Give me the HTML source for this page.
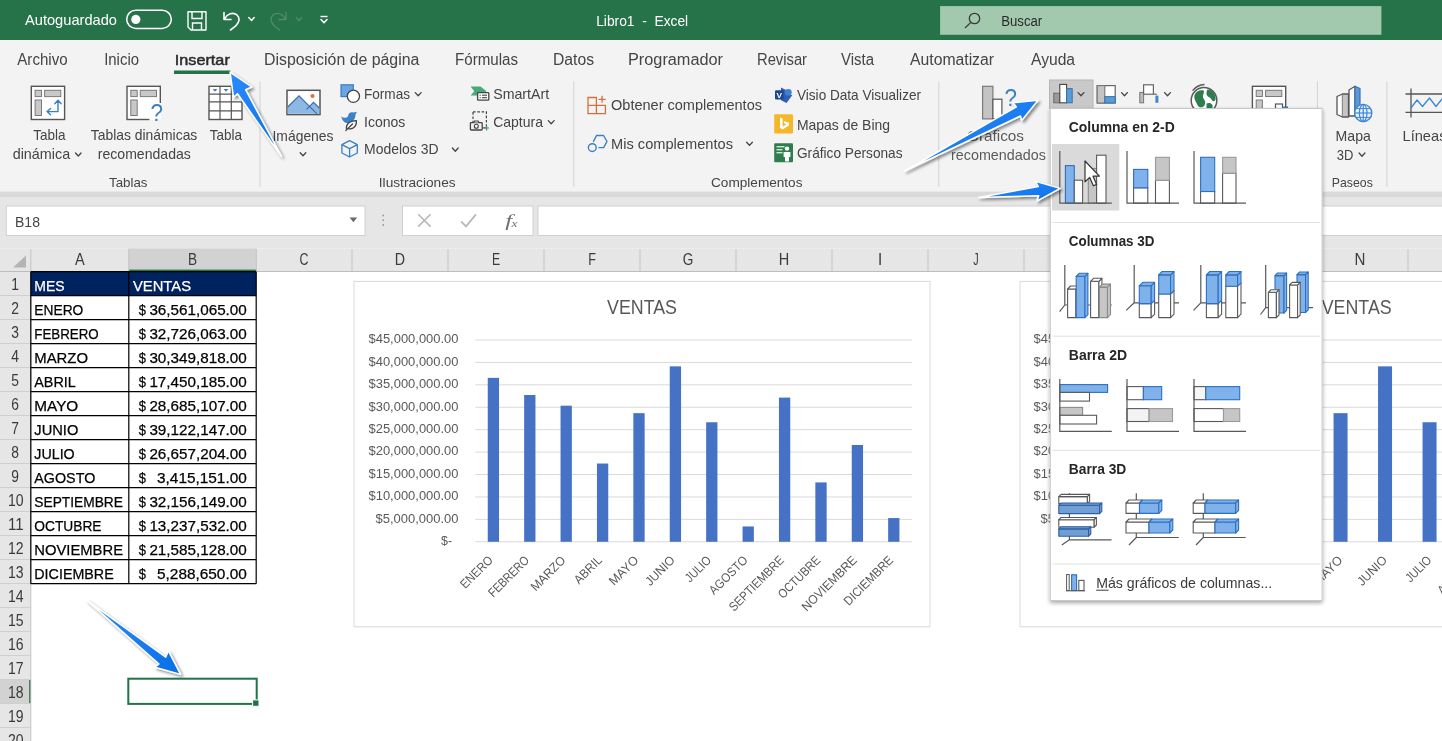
<!DOCTYPE html>
<html lang="es"><head><meta charset="utf-8"><title>Libro1 - Excel</title>
<style>
html,body{margin:0;padding:0;background:#fff;overflow:hidden}
svg{display:block}
text{font-family:"Liberation Sans", sans-serif;white-space:pre;paint-order:stroke}
</style></head><body>
<svg width="1442" height="741" viewBox="0 0 1442 741">
<defs>
<linearGradient id="ag" x1="0" y1="0" x2="1" y2="1"><stop offset="0" stop-color="#2b8cff"/><stop offset="1" stop-color="#0a6fe6"/></linearGradient>
<filter id="sh" x="-20%" y="-20%" width="150%" height="150%"><feGaussianBlur in="SourceAlpha" stdDeviation="1.6"/><feOffset dx="1.5" dy="2"/><feComponentTransfer><feFuncA type="linear" slope="0.45"/></feComponentTransfer><feMerge><feMergeNode/><feMergeNode in="SourceGraphic"/></feMerge></filter>
<filter id="dsh" x="-5%" y="-5%" width="112%" height="112%"><feGaussianBlur in="SourceAlpha" stdDeviation="2.2"/><feOffset dx="0" dy="1.5"/><feComponentTransfer><feFuncA type="linear" slope="0.35"/></feComponentTransfer><feMerge><feMergeNode/><feMergeNode in="SourceGraphic"/></feMerge></filter>
<filter id="soft" filterUnits="userSpaceOnUse" x="-20" y="-20" width="1482" height="781"><feGaussianBlur stdDeviation="0.4"/></filter>
</defs>
<g filter="url(#soft)">
<rect x="-20.00" y="-20.00" width="1482.00" height="781.00" fill="#ffffff"/>
<rect x="-20.00" y="-20.00" width="1482.00" height="60.00" fill="#277249"/>
<rect x="-20.00" y="40.00" width="1482.00" height="151.50" fill="#f3f3f3"/>
<rect x="-20.00" y="191.50" width="1482.00" height="5.50" fill="#dadada"/>
<rect x="-20.00" y="197.00" width="1482.00" height="51.50" fill="#e6e6e6"/>
<text x="25.0" y="25.0" font-size="14.5" fill="#ffffff" textLength="92.0" lengthAdjust="spacingAndGlyphs">Autoguardado</text>
<rect x="126.70" y="10.20" width="44.60" height="18.20" fill="none" stroke="#ffffff" stroke-width="1.5" rx="9.1"/>
<circle cx="135.8" cy="19.4" r="4.6" fill="#fff"/>
<path d="M188 11.8 H206 V30 H191 L188 27 Z" fill="none" stroke="#ffffff" stroke-width="1.4" stroke-linejoin="round"/>
<path d="M192 11.8 V18.5 H202 V11.8" fill="none" stroke="#ffffff" stroke-width="1.4"/>
<path d="M192.5 30 V23 H201.5 V30" fill="none" stroke="#ffffff" stroke-width="1.4"/>
<path d="M224 12.5 V19.5 H231 M224.5 19 C227 14 233 11.5 237 15 C241.5 19.5 238 25 230.5 30" fill="none" stroke="#ffffff" stroke-width="1.6" stroke-linecap="round" stroke-linejoin="round"/>
<path d="M248.8 17.5 L251.5 20.5 L254.2 17.5" fill="none" stroke="#ffffff" stroke-width="1.5" stroke-linecap="round" stroke-linejoin="round"/>
<path d="M286 12.5 V19.5 H279 M285.5 19 C283 14 277 11.5 273 15 C268.5 19.5 272 25 279.5 30" fill="none" stroke="#4f8c68" stroke-width="1.4" stroke-linecap="round" stroke-linejoin="round"/>
<path d="M296.2 17.5 L299.0 20.5 L301.8 17.5" fill="none" stroke="#4f8c68" stroke-width="1.3" stroke-linecap="round" stroke-linejoin="round"/>
<line x1="320.50" y1="16.50" x2="327.50" y2="16.50" stroke="#ffffff" stroke-width="1.4"/>
<path d="M321.0 19.6 L324.0 22.8 L327.0 19.6" fill="none" stroke="#ffffff" stroke-width="1.5" stroke-linecap="round" stroke-linejoin="round"/>
<text x="596.2" y="26.0" font-size="14" fill="#ffffff" textLength="92.0" lengthAdjust="spacingAndGlyphs">Libro1  -  Excel</text>
<rect x="940.10" y="6.10" width="441.30" height="28.70" fill="#a2c9ae"/>
<circle cx="974.5" cy="18.5" r="5.2" fill="none" stroke="#3a3a3a" stroke-width="1.3"/>
<line x1="970.80" y1="22.40" x2="965.00" y2="28.00" stroke="#3a3a3a" stroke-width="1.3"/>
<text x="1001.2" y="26.0" font-size="14" fill="#2b2b2b" textLength="41.0" lengthAdjust="spacingAndGlyphs">Buscar</text>
<text x="17.3" y="65.0" font-size="16" fill="#444444" textLength="50.3" lengthAdjust="spacingAndGlyphs">Archivo</text>
<text x="104.2" y="65.0" font-size="16" fill="#444444" textLength="34.8" lengthAdjust="spacingAndGlyphs">Inicio</text>
<text x="264.0" y="65.0" font-size="16" fill="#444444" textLength="155.4" lengthAdjust="spacingAndGlyphs">Disposición de página</text>
<text x="455.0" y="65.0" font-size="16" fill="#444444" textLength="63.0" lengthAdjust="spacingAndGlyphs">Fórmulas</text>
<text x="553.0" y="65.0" font-size="16" fill="#444444" textLength="41.0" lengthAdjust="spacingAndGlyphs">Datos</text>
<text x="628.0" y="65.0" font-size="16" fill="#444444" textLength="95.0" lengthAdjust="spacingAndGlyphs">Programador</text>
<text x="757.0" y="65.0" font-size="16" fill="#444444" textLength="50.0" lengthAdjust="spacingAndGlyphs">Revisar</text>
<text x="841.0" y="65.0" font-size="16" fill="#444444" textLength="33.0" lengthAdjust="spacingAndGlyphs">Vista</text>
<text x="910.0" y="65.0" font-size="16" fill="#444444" textLength="84.0" lengthAdjust="spacingAndGlyphs">Automatizar</text>
<text x="1031.0" y="65.0" font-size="16" fill="#444444" textLength="44.0" lengthAdjust="spacingAndGlyphs">Ayuda</text>
<text x="174.8" y="65.0" font-size="15.5" fill="#2b2b2b" textLength="55.0" lengthAdjust="spacingAndGlyphs" stroke="#2b2b2b" stroke-width="0.5">Insertar</text>
<rect x="174.00" y="70.50" width="56.50" height="3.50" fill="#217346"/>
<line x1="260.00" y1="81.50" x2="260.00" y2="187.00" stroke="#d2d2d2" stroke-width="1"/>
<line x1="573.80" y1="81.50" x2="573.80" y2="187.00" stroke="#d2d2d2" stroke-width="1"/>
<line x1="938.80" y1="81.50" x2="938.80" y2="187.00" stroke="#d2d2d2" stroke-width="1"/>
<line x1="1317.40" y1="81.50" x2="1317.40" y2="187.00" stroke="#d2d2d2" stroke-width="1"/>
<line x1="1386.90" y1="81.50" x2="1386.90" y2="187.00" stroke="#d2d2d2" stroke-width="1"/>
<rect x="31.30" y="86.30" width="33.30" height="33.20" fill="#fff" stroke="#555555" stroke-width="1.4"/>
<rect x="35.10" y="90.30" width="6.40" height="6.30" fill="#c8c8c8" stroke="#7a7a7a" stroke-width="1"/>
<rect x="44.60" y="90.30" width="16.20" height="6.30" fill="#c8c8c8" stroke="#7a7a7a" stroke-width="1"/>
<rect x="35.10" y="100.00" width="6.40" height="15.50" fill="#c8c8c8" stroke="#7a7a7a" stroke-width="1"/>
<path d="M58 101 V111.6 H47.5 M54.8 103.8 L58 100.3 L61.2 103.8 M50.6 108.4 L47 111.6 L50.6 114.8" fill="none" stroke="#3b7fc4" stroke-width="1.4" stroke-linecap="round" stroke-linejoin="round"/>
<text x="33.2" y="139.6" font-size="15" fill="#444444" textLength="32.2" lengthAdjust="spacingAndGlyphs">Tabla</text>
<text x="12.7" y="159.2" font-size="15" fill="#444444" textLength="57.5" lengthAdjust="spacingAndGlyphs">dinámica</text>
<path d="M75.5 153.0 L78.3 156.0 L81.0 153.0" fill="none" stroke="#444444" stroke-width="1.3" stroke-linecap="round" stroke-linejoin="round"/>
<rect x="127.00" y="86.30" width="33.30" height="33.20" fill="#fff" stroke="#555555" stroke-width="1.4"/>
<rect x="130.80" y="90.30" width="6.40" height="6.30" fill="#c8c8c8" stroke="#7a7a7a" stroke-width="1"/>
<rect x="140.30" y="90.30" width="16.20" height="6.30" fill="#c8c8c8" stroke="#7a7a7a" stroke-width="1"/>
<rect x="130.80" y="100.00" width="6.40" height="15.50" fill="#c8c8c8" stroke="#7a7a7a" stroke-width="1"/>
<rect x="149.50" y="103.00" width="14.00" height="18.00" fill="#f3f3f3"/>
<rect x="149.50" y="103.00" width="11.30" height="16.50" fill="#fff"/>
<text x="150.5" y="120.5" font-size="23" fill="#3b7fc4" textLength="12.5" lengthAdjust="spacingAndGlyphs">?</text>
<text x="90.8" y="139.6" font-size="15" fill="#444444" textLength="106.5" lengthAdjust="spacingAndGlyphs">Tablas dinámicas</text>
<text x="97.8" y="159.2" font-size="15" fill="#444444" textLength="93.0" lengthAdjust="spacingAndGlyphs">recomendadas</text>
<rect x="209.00" y="86.30" width="33.00" height="33.20" fill="#fff" stroke="#555555" stroke-width="1.4"/>
<line x1="220.00" y1="86.30" x2="220.00" y2="119.50" stroke="#555555" stroke-width="1.2"/>
<line x1="231.30" y1="86.30" x2="231.30" y2="119.50" stroke="#555555" stroke-width="1.2"/>
<line x1="209.00" y1="94.20" x2="242.00" y2="94.20" stroke="#555555" stroke-width="1.2"/>
<line x1="209.00" y1="101.90" x2="242.00" y2="101.90" stroke="#555555" stroke-width="1.2"/>
<line x1="209.00" y1="110.80" x2="242.00" y2="110.80" stroke="#555555" stroke-width="1.2"/>
<path d="M212.6 89 h4.8 l-2.4 2.8z M223.6 89 h4.8 l-2.4 2.8z M234.6 89 h4.8 l-2.4 2.8z" fill="#3b7fc4"/>
<text x="209.7" y="139.6" font-size="15" fill="#444444" textLength="32.2" lengthAdjust="spacingAndGlyphs">Tabla</text>
<text x="109.0" y="186.5" font-size="13.5" fill="#444444" textLength="38.5" lengthAdjust="spacingAndGlyphs">Tablas</text>
<rect x="287.00" y="90.30" width="33.00" height="24.30" fill="#fff" stroke="#555555" stroke-width="1.5"/>
<path d="M287.7 113.8 V107 L299 95.8 L309.5 106.3 L313.5 102.3 L319.3 108 V113.8 Z" fill="#8db8e3"/>
<path d="M287.7 107 L299 95.8 L309.5 106.3 L317 113.8 M306.5 109.3 L313.5 102.3 L319.3 108" fill="none" stroke="#3d6fa5" stroke-width="1.2"/>
<circle cx="312.5" cy="96" r="2.1" fill="#e0703a"/>
<text x="272.5" y="141.0" font-size="15" fill="#444444" textLength="61.0" lengthAdjust="spacingAndGlyphs">Imágenes</text>
<path d="M300.2 152.8 L303.0 155.8 L305.8 152.8" fill="none" stroke="#444444" stroke-width="1.3" stroke-linecap="round" stroke-linejoin="round"/>
<rect x="341.00" y="84.80" width="12.30" height="11.80" fill="#6aa5e3" stroke="#3b7fc4" stroke-width="1.2"/>
<circle cx="353.4" cy="96.3" r="6.1" fill="#fff" stroke="#444" stroke-width="1.3"/>
<text x="364.0" y="98.7" font-size="15" fill="#444444" textLength="46.0" lengthAdjust="spacingAndGlyphs">Formas</text>
<path d="M415.3 92.6 L418.2 95.8 L421.1 92.6" fill="none" stroke="#444444" stroke-width="1.3" stroke-linecap="round" stroke-linejoin="round"/>
<path d="M341.2 116.5 C343.5 118.2 346.5 118.2 348 116.2 C348.2 113 351 111.3 353.6 112.6 L357 111.8 L355.5 114.6 C355.6 118.5 353.5 121.5 350 122.8 C346 124 342.6 122 341.2 116.5 Z" fill="#3b82cc"/>
<path d="M346.5 129.5 C345.5 124.5 349 120.8 356.3 120.6 C357 126 353.5 129.6 348.2 128.6 M345.8 130.6 L352.5 124" fill="#f3f3f3" stroke="#444" stroke-width="1.2" stroke-linecap="round"/>
<text x="364.0" y="126.7" font-size="15" fill="#444444" textLength="41.3" lengthAdjust="spacingAndGlyphs">Iconos</text>
<path d="M349.6 140.6 L357.3 144.6 V153 L349.6 157 L341.9 153 V144.6 Z M341.9 144.6 L349.6 148.6 L357.3 144.6 M349.6 148.6 V157" fill="none" stroke="#3b7fc4" stroke-width="1.3" stroke-linejoin="round"/>
<text x="364.0" y="153.8" font-size="15" fill="#444444" textLength="74.5" lengthAdjust="spacingAndGlyphs">Modelos 3D</text>
<path d="M452.4 148.0 L455.3 151.2 L458.2 148.0" fill="none" stroke="#444444" stroke-width="1.3" stroke-linecap="round" stroke-linejoin="round"/>
<path d="M470.6 86.6 H480.5 L486.5 91.2 L484 93 H477.4 V95.6 H470.6 L474.3 91.2 Z" fill="#4aa877"/>
<rect x="477.60" y="92.60" width="11.20" height="7.60" fill="#fff" stroke="#444" stroke-width="1.3" rx="0.8"/>
<line x1="479.60" y1="95.20" x2="480.80" y2="95.20" stroke="#444" stroke-width="1.1"/>
<line x1="482.00" y1="95.20" x2="487.00" y2="95.20" stroke="#444" stroke-width="1.1"/>
<line x1="479.60" y1="97.70" x2="480.80" y2="97.70" stroke="#444" stroke-width="1.1"/>
<line x1="482.00" y1="97.70" x2="487.00" y2="97.70" stroke="#444" stroke-width="1.1"/>
<text x="493.2" y="98.7" font-size="15" fill="#444444" textLength="56.0" lengthAdjust="spacingAndGlyphs">SmartArt</text>
<rect x="473.00" y="111.80" width="13.40" height="16.00" fill="none" stroke="#444" stroke-width="1.2" stroke-dasharray="2.6 1.7"/>
<rect x="470.40" y="122.60" width="11.80" height="7.40" fill="#f3f3f3" stroke="#444" stroke-width="1.3" rx="0.8"/>
<path d="M473.6 122.6 L474.6 121 H478 L479 122.6" fill="#f3f3f3" stroke="#444" stroke-width="1.2"/>
<circle cx="476.3" cy="126.3" r="2" fill="none" stroke="#444" stroke-width="1.1"/>
<path d="M484.2 128 H489 M486.6 125.6 V130.4" fill="none" stroke="#3c9a62" stroke-width="1.2"/>
<text x="493.2" y="126.7" font-size="15" fill="#444444" textLength="49.8" lengthAdjust="spacingAndGlyphs">Captura</text>
<path d="M548.3 120.6 L551.2 123.8 L554.1 120.6" fill="none" stroke="#444444" stroke-width="1.3" stroke-linecap="round" stroke-linejoin="round"/>
<text x="378.8" y="186.5" font-size="13.5" fill="#444444" textLength="76.8" lengthAdjust="spacingAndGlyphs">Ilustraciones</text>
<path d="M588 97.5 H596.4 V113.6 H588 Z M596.4 105.4 H605.4 V113.6 H596.4 M588 105.4 H596.4" fill="none" stroke="#d4703c" stroke-width="1.3"/>
<path d="M598.6 99.3 H605.6 M602.1 95.8 V102.8" fill="none" stroke="#d4703c" stroke-width="1.3"/>
<text x="611.0" y="110.3" font-size="15" fill="#444444" textLength="151.0" lengthAdjust="spacingAndGlyphs">Obtener complementos</text>
<path d="M593.5 141.5 L596.5 135.5 H603.6 L607 141.5 L603.6 147.6 H599" fill="none" stroke="#3b7fc4" stroke-width="1.4" stroke-linejoin="round" stroke-linecap="round"/>
<circle cx="592.3" cy="147.6" r="3.9" fill="none" stroke="#3b7fc4" stroke-width="1.4"/>
<text x="611.0" y="148.5" font-size="15" fill="#444444" textLength="122.0" lengthAdjust="spacingAndGlyphs">Mis complementos</text>
<path d="M746.6 142.2 L749.5 145.4 L752.4 142.2" fill="none" stroke="#444444" stroke-width="1.3" stroke-linecap="round" stroke-linejoin="round"/>
<path d="M781 87.6 L786.5 90.2 V93 L792.3 95.2 L786.5 103 L781 100.2 Z" fill="#2f5fb5"/>
<circle cx="788.3" cy="92.3" r="3.4" fill="#3f7fd8"/>
<rect x="775.00" y="90.20" width="8.60" height="9.20" fill="#1f4596" rx="1"/>
<text x="776.4" y="97.6" font-size="7.5" fill="#fff" font-weight="bold" textLength="5.5" lengthAdjust="spacingAndGlyphs">V</text>
<text x="797.0" y="100.4" font-size="15" fill="#444444" textLength="124.0" lengthAdjust="spacingAndGlyphs">Visio Data Visualizer</text>
<rect x="774.20" y="114.20" width="18.80" height="19.30" fill="#f5b62a" rx="1.2"/>
<path d="M780 117.5 L782.6 118.4 V126.6 L786.4 124.6 L784.6 123.7 L783.5 121 L789 122.8 V125.6 L782.6 129.4 L780 127.8 Z" fill="#fff"/>
<text x="797.0" y="129.5" font-size="15" fill="#444444" textLength="93.0" lengthAdjust="spacingAndGlyphs">Mapas de Bing</text>
<rect x="774.20" y="143.20" width="18.80" height="19.00" fill="#2f7d4f" rx="1"/>
<rect x="776.50" y="146.00" width="8.00" height="1.40" fill="#cfe6d8"/>
<rect x="776.50" y="149.00" width="6.00" height="1.40" fill="#cfe6d8"/>
<rect x="776.50" y="152.00" width="6.00" height="1.40" fill="#cfe6d8"/>
<circle cx="787" cy="148.6" r="2.2" fill="#fff"/>
<path d="M783.6 152 H790.4 V157 H789 V161.5 H785 V157 H783.6 Z" fill="#fff"/>
<text x="797.0" y="158.3" font-size="15" fill="#444444" textLength="105.5" lengthAdjust="spacingAndGlyphs">Gráfico Personas</text>
<text x="711.0" y="186.5" font-size="13.5" fill="#444444" textLength="91.5" lengthAdjust="spacingAndGlyphs">Complementos</text>
<rect x="982.60" y="86.30" width="10.30" height="32.60" fill="#c4c4c4" stroke="#7a7a7a" stroke-width="1.2"/>
<rect x="992.90" y="99.20" width="9.00" height="19.70" fill="#fff" stroke="#555" stroke-width="1.2"/>
<text x="1004.5" y="106.0" font-size="24" fill="#3b7fc4" textLength="12.5" lengthAdjust="spacingAndGlyphs">?</text>
<text x="967.0" y="141.0" font-size="15" fill="#5a5a5a" textLength="57.0" lengthAdjust="spacingAndGlyphs">Gráficos</text>
<text x="951.0" y="160.0" font-size="15" fill="#5a5a5a" textLength="94.8" lengthAdjust="spacingAndGlyphs">recomendados</text>
<rect x="1049.50" y="80.00" width="43.50" height="28.50" fill="#c9c9c9" stroke="#b5b5b5" stroke-width="1"/>
<rect x="1053.80" y="93.20" width="6.00" height="9.60" fill="#9a9a9a" stroke="#6b6b6b" stroke-width="1"/>
<rect x="1059.80" y="84.40" width="6.80" height="18.40" fill="#fff" stroke="#444" stroke-width="1.1"/>
<rect x="1066.60" y="88.60" width="5.60" height="14.20" fill="#5b9bd5" stroke="#3a72b0" stroke-width="1"/>
<path d="M1078.1 92.6 L1081.0 95.8 L1083.9 92.6" fill="none" stroke="#444" stroke-width="1.3" stroke-linecap="round" stroke-linejoin="round"/>
<rect x="1097.20" y="85.60" width="18.00" height="17.40" fill="#fff" stroke="#666" stroke-width="1.2"/>
<rect x="1097.20" y="85.60" width="7.60" height="17.40" fill="#c4c4c4" stroke="#777" stroke-width="1.1"/>
<rect x="1104.80" y="96.60" width="10.40" height="6.40" fill="#5b9bd5" stroke="#3a72b0" stroke-width="1"/>
<path d="M1121.6 92.6 L1124.5 95.8 L1127.4 92.6" fill="none" stroke="#444" stroke-width="1.3" stroke-linecap="round" stroke-linejoin="round"/>
<rect x="1139.80" y="92.40" width="3.80" height="10.40" fill="#bdbdbd" stroke="#777" stroke-width="1"/>
<rect x="1143.60" y="84.80" width="9.80" height="9.40" fill="#fff" stroke="#666" stroke-width="1.2"/>
<rect x="1155.40" y="95.60" width="3.00" height="7.20" fill="#3f86d6"/>
<path d="M1153.4 94.2 H1156.8" fill="none" stroke="#666" stroke-width="1.2"/>
<path d="M1164.6 92.6 L1167.5 95.8 L1170.4 92.6" fill="none" stroke="#444" stroke-width="1.3" stroke-linecap="round" stroke-linejoin="round"/>
<circle cx="1204" cy="100.4" r="12.8" fill="#fff" stroke="#5a5a5a" stroke-width="1.5"/>
<path d="M1192.6 90.6 A16 16 0 0 1 1204.5 84.4" fill="none" stroke="#5a5a5a" stroke-width="1.5"/>
<path d="M1194.5 95 C1196 91 1200 89.5 1203.5 90.5 C1205 92.5 1202.5 94.5 1203 97 C1203.5 99.5 1206 100.5 1205 104 C1204 108 1199 108.5 1197.5 105 C1196.5 102.5 1193.5 99 1194.5 95 Z M1207.5 89.6 C1211.5 89.5 1215 93 1215.6 98 C1215.8 101.5 1213 102.5 1211.5 99.5 C1210 96.5 1206.5 97 1206.5 93.5 C1206.5 92 1206.8 90.5 1207.5 89.6 Z M1206.5 103.5 C1209.5 102 1213.5 103.5 1212.5 107.5 C1211.5 110.5 1207.5 111 1206.6 108 Z" fill="#2e7d4f"/>
<rect x="1252.40" y="86.30" width="33.30" height="33.00" fill="#fff" stroke="#555555" stroke-width="1.4"/>
<rect x="1256.20" y="90.30" width="6.20" height="6.20" fill="#c8c8c8" stroke="#7a7a7a" stroke-width="1"/>
<rect x="1265.60" y="90.30" width="16.20" height="6.20" fill="#c8c8c8" stroke="#7a7a7a" stroke-width="1"/>
<rect x="1256.20" y="100.00" width="6.20" height="15.00" fill="#c8c8c8" stroke="#7a7a7a" stroke-width="1"/>
<rect x="1275.50" y="104.00" width="7.00" height="15.00" fill="#fff" stroke="#555" stroke-width="1.2"/>
<rect x="1282.50" y="107.00" width="5.00" height="12.00" fill="#5b9bd5" stroke="#3a72b0" stroke-width="1"/>
<path d="M1337 96.5 L1342.5 94 V117 L1337 114.5 Z" fill="#fff" stroke="#555" stroke-width="1.3" stroke-linejoin="round"/>
<path d="M1342.5 94 H1348.5 V117 H1342.5" fill="#c4c4c4" stroke="#555" stroke-width="1.3" stroke-linejoin="round"/>
<path d="M1349 90 L1355 86.3 V116 L1349 116 Z" fill="#fff" stroke="#555" stroke-width="1.3" stroke-linejoin="round"/>
<path d="M1355 86.3 L1360 88.5 V112 H1355 Z" fill="#5b9bd5" stroke="#3a72b0" stroke-width="1.2" stroke-linejoin="round"/>
<circle cx="1363.2" cy="113" r="8.6" fill="#eaf3fc" stroke="#3f86d6" stroke-width="1.4"/>
<ellipse cx="1363.2" cy="113" rx="3.8" ry="8.6" fill="none" stroke="#3f86d6" stroke-width="1.2"/>
<line x1="1354.60" y1="113.00" x2="1371.80" y2="113.00" stroke="#3f86d6" stroke-width="1.2"/>
<line x1="1363.20" y1="104.40" x2="1363.20" y2="121.60" stroke="#3f86d6" stroke-width="1.2"/>
<path d="M1356 108.6 H1370.4 M1356 117.4 H1370.4" fill="none" stroke="#3f86d6" stroke-width="1"/>
<text x="1335.6" y="140.6" font-size="15" fill="#444444" textLength="35.2" lengthAdjust="spacingAndGlyphs">Mapa</text>
<text x="1336.8" y="159.6" font-size="15" fill="#444444" textLength="16.6" lengthAdjust="spacingAndGlyphs">3D</text>
<path d="M1359.1 153.0 L1362.0 156.2 L1364.9 153.0" fill="none" stroke="#444444" stroke-width="1.3" stroke-linecap="round" stroke-linejoin="round"/>
<text x="1331.8" y="186.5" font-size="13.5" fill="#444444" textLength="41.0" lengthAdjust="spacingAndGlyphs">Paseos</text>
<path d="M1405.5 94 H1442 M1405.5 112.4 H1442 M1411 88.5 V117.5" fill="none" stroke="#555" stroke-width="1.3"/>
<path d="M1411 108 L1417 100 L1422.5 106.5 L1429.5 98 L1436 106.5 L1442 99" fill="none" stroke="#3f86d6" stroke-width="1.3" stroke-linejoin="round"/>
<text x="1402.5" y="140.6" font-size="15" fill="#444444" textLength="44.0" lengthAdjust="spacingAndGlyphs">Líneas</text>
<rect x="6.30" y="206.00" width="358.70" height="29.50" fill="#fff" stroke="#d0d0d0" stroke-width="1"/>
<text x="15.0" y="226.8" font-size="15" fill="#444444" textLength="25.0" lengthAdjust="spacingAndGlyphs">B18</text>
<path d="M349.6 217.6 H357.2 L353.4 222.2 Z" fill="#6a6a6a"/>
<circle cx="383.2" cy="215.5" r="0.9" fill="#9a9a9a"/>
<circle cx="383.2" cy="220.2" r="0.9" fill="#9a9a9a"/>
<circle cx="383.2" cy="225" r="0.9" fill="#9a9a9a"/>
<rect x="402.50" y="206.00" width="130.50" height="29.50" fill="#fff" stroke="#d0d0d0" stroke-width="1"/>
<path d="M418.2 214.2 L430.6 226.6 M430.6 214.2 L418.2 226.6" fill="none" stroke="#b8b8b8" stroke-width="1.6"/>
<path d="M461 221.4 L466 226.4 L476 214.4" fill="none" stroke="#b8b8b8" stroke-width="1.8"/>
<text x="505.2" y="225.6" font-size="16.5" fill="#707070" textLength="7.0" lengthAdjust="spacingAndGlyphs" style="font-family:'Liberation Serif',serif;font-style:italic">f</text>
<text x="511.6" y="226.6" font-size="10.5" fill="#707070" textLength="6.0" lengthAdjust="spacingAndGlyphs" style="font-family:'Liberation Serif',serif;font-style:italic">x</text>
<rect x="538.00" y="206.00" width="910.00" height="29.50" fill="#fff" stroke="#d0d0d0" stroke-width="1"/>
<rect x="-20.00" y="248.50" width="1482.00" height="23.00" fill="#e6e6e6"/>
<rect x="128.80" y="248.50" width="127.50" height="23.00" fill="#d2d2d2"/>
<rect x="128.80" y="269.60" width="127.50" height="2.00" fill="#217346"/>
<line x1="-20.00" y1="271.50" x2="1462.00" y2="271.50" stroke="#bdbdbd" stroke-width="1"/>
<path d="M26 255.5 V267.4 H13 Z" fill="#b4b4b4"/>
<line x1="30.80" y1="249.00" x2="30.80" y2="271.00" stroke="#c4c4c4" stroke-width="1"/>
<line x1="128.80" y1="249.00" x2="128.80" y2="271.00" stroke="#c4c4c4" stroke-width="1"/>
<line x1="256.30" y1="249.00" x2="256.30" y2="271.00" stroke="#c4c4c4" stroke-width="1"/>
<line x1="352.00" y1="249.00" x2="352.00" y2="271.00" stroke="#c4c4c4" stroke-width="1"/>
<line x1="448.00" y1="249.00" x2="448.00" y2="271.00" stroke="#c4c4c4" stroke-width="1"/>
<line x1="544.00" y1="249.00" x2="544.00" y2="271.00" stroke="#c4c4c4" stroke-width="1"/>
<line x1="640.00" y1="249.00" x2="640.00" y2="271.00" stroke="#c4c4c4" stroke-width="1"/>
<line x1="736.00" y1="249.00" x2="736.00" y2="271.00" stroke="#c4c4c4" stroke-width="1"/>
<line x1="832.00" y1="249.00" x2="832.00" y2="271.00" stroke="#c4c4c4" stroke-width="1"/>
<line x1="928.00" y1="249.00" x2="928.00" y2="271.00" stroke="#c4c4c4" stroke-width="1"/>
<line x1="1024.00" y1="249.00" x2="1024.00" y2="271.00" stroke="#c4c4c4" stroke-width="1"/>
<line x1="1120.00" y1="249.00" x2="1120.00" y2="271.00" stroke="#c4c4c4" stroke-width="1"/>
<line x1="1216.00" y1="249.00" x2="1216.00" y2="271.00" stroke="#c4c4c4" stroke-width="1"/>
<line x1="1312.00" y1="249.00" x2="1312.00" y2="271.00" stroke="#c4c4c4" stroke-width="1"/>
<line x1="1408.00" y1="249.00" x2="1408.00" y2="271.00" stroke="#c4c4c4" stroke-width="1"/>
<text x="79.8" y="265.2" font-size="15.6" fill="#3a3a3a" text-anchor="middle" textLength="9.7" lengthAdjust="spacingAndGlyphs">A</text>
<text x="192.6" y="265.2" font-size="15.6" fill="#3a3a3a" text-anchor="middle" textLength="9.1" lengthAdjust="spacingAndGlyphs">B</text>
<text x="304.1" y="265.2" font-size="15.6" fill="#3a3a3a" text-anchor="middle" textLength="9.0" lengthAdjust="spacingAndGlyphs">C</text>
<text x="400.0" y="265.2" font-size="15.6" fill="#3a3a3a" text-anchor="middle" textLength="10.3" lengthAdjust="spacingAndGlyphs">D</text>
<text x="496.0" y="265.2" font-size="15.6" fill="#3a3a3a" text-anchor="middle" textLength="8.2" lengthAdjust="spacingAndGlyphs">E</text>
<text x="592.0" y="265.2" font-size="15.6" fill="#3a3a3a" text-anchor="middle" textLength="7.7" lengthAdjust="spacingAndGlyphs">F</text>
<text x="688.0" y="265.2" font-size="15.6" fill="#3a3a3a" text-anchor="middle" textLength="10.6" lengthAdjust="spacingAndGlyphs">G</text>
<text x="784.0" y="265.2" font-size="15.6" fill="#3a3a3a" text-anchor="middle" textLength="10.5" lengthAdjust="spacingAndGlyphs">H</text>
<text x="880.0" y="265.2" font-size="15.6" fill="#3a3a3a" text-anchor="middle" textLength="4.2" lengthAdjust="spacingAndGlyphs">I</text>
<text x="976.0" y="265.2" font-size="15.6" fill="#3a3a3a" text-anchor="middle" textLength="5.4" lengthAdjust="spacingAndGlyphs">J</text>
<text x="1072.0" y="265.2" font-size="15.6" fill="#3a3a3a" text-anchor="middle" textLength="8.7" lengthAdjust="spacingAndGlyphs">K</text>
<text x="1168.0" y="265.2" font-size="15.6" fill="#3a3a3a" text-anchor="middle" textLength="7.0" lengthAdjust="spacingAndGlyphs">L</text>
<text x="1264.0" y="265.2" font-size="15.6" fill="#3a3a3a" text-anchor="middle" textLength="14.4" lengthAdjust="spacingAndGlyphs">M</text>
<text x="1360.0" y="265.2" font-size="15.6" fill="#3a3a3a" text-anchor="middle" textLength="10.9" lengthAdjust="spacingAndGlyphs">N</text>
<rect x="-20.00" y="272.00" width="50.80" height="489.00" fill="#e6e6e6"/>
<rect x="-20.00" y="679.50" width="50.80" height="24.00" fill="#d2d2d2"/>
<rect x="29.20" y="679.50" width="1.80" height="24.00" fill="#217346"/>
<line x1="30.80" y1="272.00" x2="30.80" y2="761.00" stroke="#c4c4c4" stroke-width="1"/>
<line x1="-20.00" y1="295.50" x2="30.80" y2="295.50" stroke="#cfcfcf" stroke-width="1"/>
<text x="15.2" y="290.4" font-size="16.2" fill="#3a3a3a" text-anchor="middle" textLength="7.7" lengthAdjust="spacingAndGlyphs">1</text>
<line x1="-20.00" y1="319.50" x2="30.80" y2="319.50" stroke="#cfcfcf" stroke-width="1"/>
<text x="15.2" y="314.4" font-size="16.2" fill="#3a3a3a" text-anchor="middle" textLength="7.7" lengthAdjust="spacingAndGlyphs">2</text>
<line x1="-20.00" y1="343.50" x2="30.80" y2="343.50" stroke="#cfcfcf" stroke-width="1"/>
<text x="15.2" y="338.4" font-size="16.2" fill="#3a3a3a" text-anchor="middle" textLength="7.7" lengthAdjust="spacingAndGlyphs">3</text>
<line x1="-20.00" y1="367.50" x2="30.80" y2="367.50" stroke="#cfcfcf" stroke-width="1"/>
<text x="15.2" y="362.4" font-size="16.2" fill="#3a3a3a" text-anchor="middle" textLength="7.7" lengthAdjust="spacingAndGlyphs">4</text>
<line x1="-20.00" y1="391.50" x2="30.80" y2="391.50" stroke="#cfcfcf" stroke-width="1"/>
<text x="15.2" y="386.4" font-size="16.2" fill="#3a3a3a" text-anchor="middle" textLength="7.7" lengthAdjust="spacingAndGlyphs">5</text>
<line x1="-20.00" y1="415.50" x2="30.80" y2="415.50" stroke="#cfcfcf" stroke-width="1"/>
<text x="15.2" y="410.4" font-size="16.2" fill="#3a3a3a" text-anchor="middle" textLength="7.7" lengthAdjust="spacingAndGlyphs">6</text>
<line x1="-20.00" y1="439.50" x2="30.80" y2="439.50" stroke="#cfcfcf" stroke-width="1"/>
<text x="15.2" y="434.4" font-size="16.2" fill="#3a3a3a" text-anchor="middle" textLength="7.7" lengthAdjust="spacingAndGlyphs">7</text>
<line x1="-20.00" y1="463.50" x2="30.80" y2="463.50" stroke="#cfcfcf" stroke-width="1"/>
<text x="15.2" y="458.4" font-size="16.2" fill="#3a3a3a" text-anchor="middle" textLength="7.7" lengthAdjust="spacingAndGlyphs">8</text>
<line x1="-20.00" y1="487.50" x2="30.80" y2="487.50" stroke="#cfcfcf" stroke-width="1"/>
<text x="15.2" y="482.4" font-size="16.2" fill="#3a3a3a" text-anchor="middle" textLength="7.7" lengthAdjust="spacingAndGlyphs">9</text>
<line x1="-20.00" y1="511.50" x2="30.80" y2="511.50" stroke="#cfcfcf" stroke-width="1"/>
<text x="15.8" y="506.4" font-size="16.2" fill="#3a3a3a" text-anchor="middle" textLength="15.6" lengthAdjust="spacingAndGlyphs">10</text>
<line x1="-20.00" y1="535.50" x2="30.80" y2="535.50" stroke="#cfcfcf" stroke-width="1"/>
<text x="15.8" y="530.4" font-size="16.2" fill="#3a3a3a" text-anchor="middle" textLength="15.6" lengthAdjust="spacingAndGlyphs">11</text>
<line x1="-20.00" y1="559.50" x2="30.80" y2="559.50" stroke="#cfcfcf" stroke-width="1"/>
<text x="15.8" y="554.4" font-size="16.2" fill="#3a3a3a" text-anchor="middle" textLength="15.6" lengthAdjust="spacingAndGlyphs">12</text>
<line x1="-20.00" y1="583.50" x2="30.80" y2="583.50" stroke="#cfcfcf" stroke-width="1"/>
<text x="15.8" y="578.4" font-size="16.2" fill="#3a3a3a" text-anchor="middle" textLength="15.6" lengthAdjust="spacingAndGlyphs">13</text>
<line x1="-20.00" y1="607.50" x2="30.80" y2="607.50" stroke="#cfcfcf" stroke-width="1"/>
<text x="15.8" y="602.4" font-size="16.2" fill="#3a3a3a" text-anchor="middle" textLength="15.6" lengthAdjust="spacingAndGlyphs">14</text>
<line x1="-20.00" y1="631.50" x2="30.80" y2="631.50" stroke="#cfcfcf" stroke-width="1"/>
<text x="15.8" y="626.4" font-size="16.2" fill="#3a3a3a" text-anchor="middle" textLength="15.6" lengthAdjust="spacingAndGlyphs">15</text>
<line x1="-20.00" y1="655.50" x2="30.80" y2="655.50" stroke="#cfcfcf" stroke-width="1"/>
<text x="15.8" y="650.4" font-size="16.2" fill="#3a3a3a" text-anchor="middle" textLength="15.6" lengthAdjust="spacingAndGlyphs">16</text>
<line x1="-20.00" y1="679.50" x2="30.80" y2="679.50" stroke="#cfcfcf" stroke-width="1"/>
<text x="15.8" y="674.4" font-size="16.2" fill="#3a3a3a" text-anchor="middle" textLength="15.6" lengthAdjust="spacingAndGlyphs">17</text>
<line x1="-20.00" y1="703.50" x2="30.80" y2="703.50" stroke="#cfcfcf" stroke-width="1"/>
<text x="15.8" y="698.4" font-size="16.2" fill="#3a3a3a" text-anchor="middle" textLength="15.6" lengthAdjust="spacingAndGlyphs">18</text>
<line x1="-20.00" y1="727.50" x2="30.80" y2="727.50" stroke="#cfcfcf" stroke-width="1"/>
<text x="15.8" y="722.4" font-size="16.2" fill="#3a3a3a" text-anchor="middle" textLength="15.6" lengthAdjust="spacingAndGlyphs">19</text>
<line x1="-20.00" y1="751.50" x2="30.80" y2="751.50" stroke="#cfcfcf" stroke-width="1"/>
<text x="15.8" y="746.4" font-size="16.2" fill="#3a3a3a" text-anchor="middle" textLength="15.6" lengthAdjust="spacingAndGlyphs">20</text>
<rect x="30.80" y="271.70" width="225.40" height="24.00" fill="#06205e"/>
<text x="34.3" y="290.5" font-size="15.2" fill="#fff" textLength="30.3" lengthAdjust="spacingAndGlyphs" stroke="#fff" stroke-width="0.25">MES</text>
<text x="133.0" y="290.5" font-size="15.2" fill="#fff" textLength="58.0" lengthAdjust="spacingAndGlyphs" stroke="#fff" stroke-width="0.25">VENTAS</text>
<text x="34.3" y="314.5" font-size="15.2" fill="#000" textLength="49.0" lengthAdjust="spacingAndGlyphs" stroke="#000" stroke-width="0.25">ENERO</text>
<text x="138.8" y="314.5" font-size="15.2" fill="#000" textLength="7.2" lengthAdjust="spacingAndGlyphs" stroke="#000" stroke-width="0.25">$</text>
<text x="246.8" y="314.5" font-size="15.2" fill="#000" text-anchor="end" textLength="97.4" lengthAdjust="spacingAndGlyphs" stroke="#000" stroke-width="0.25">36,561,065.00</text>
<text x="34.3" y="338.5" font-size="15.2" fill="#000" textLength="64.4" lengthAdjust="spacingAndGlyphs" stroke="#000" stroke-width="0.25">FEBRERO</text>
<text x="138.8" y="338.5" font-size="15.2" fill="#000" textLength="7.2" lengthAdjust="spacingAndGlyphs" stroke="#000" stroke-width="0.25">$</text>
<text x="246.8" y="338.5" font-size="15.2" fill="#000" text-anchor="end" textLength="97.4" lengthAdjust="spacingAndGlyphs" stroke="#000" stroke-width="0.25">32,726,063.00</text>
<text x="34.3" y="362.5" font-size="15.2" fill="#000" textLength="53.7" lengthAdjust="spacingAndGlyphs" stroke="#000" stroke-width="0.25">MARZO</text>
<text x="138.8" y="362.5" font-size="15.2" fill="#000" textLength="7.2" lengthAdjust="spacingAndGlyphs" stroke="#000" stroke-width="0.25">$</text>
<text x="246.8" y="362.5" font-size="15.2" fill="#000" text-anchor="end" textLength="97.4" lengthAdjust="spacingAndGlyphs" stroke="#000" stroke-width="0.25">30,349,818.00</text>
<text x="34.3" y="386.5" font-size="15.2" fill="#000" textLength="41.5" lengthAdjust="spacingAndGlyphs" stroke="#000" stroke-width="0.25">ABRIL</text>
<text x="138.8" y="386.5" font-size="15.2" fill="#000" textLength="7.2" lengthAdjust="spacingAndGlyphs" stroke="#000" stroke-width="0.25">$</text>
<text x="246.8" y="386.5" font-size="15.2" fill="#000" text-anchor="end" textLength="97.4" lengthAdjust="spacingAndGlyphs" stroke="#000" stroke-width="0.25">17,450,185.00</text>
<text x="34.3" y="410.5" font-size="15.2" fill="#000" textLength="44.0" lengthAdjust="spacingAndGlyphs" stroke="#000" stroke-width="0.25">MAYO</text>
<text x="138.8" y="410.5" font-size="15.2" fill="#000" textLength="7.2" lengthAdjust="spacingAndGlyphs" stroke="#000" stroke-width="0.25">$</text>
<text x="246.8" y="410.5" font-size="15.2" fill="#000" text-anchor="end" textLength="97.4" lengthAdjust="spacingAndGlyphs" stroke="#000" stroke-width="0.25">28,685,107.00</text>
<text x="34.3" y="434.5" font-size="15.2" fill="#000" textLength="44.0" lengthAdjust="spacingAndGlyphs" stroke="#000" stroke-width="0.25">JUNIO</text>
<text x="138.8" y="434.5" font-size="15.2" fill="#000" textLength="7.2" lengthAdjust="spacingAndGlyphs" stroke="#000" stroke-width="0.25">$</text>
<text x="246.8" y="434.5" font-size="15.2" fill="#000" text-anchor="end" textLength="97.4" lengthAdjust="spacingAndGlyphs" stroke="#000" stroke-width="0.25">39,122,147.00</text>
<text x="34.3" y="458.5" font-size="15.2" fill="#000" textLength="40.4" lengthAdjust="spacingAndGlyphs" stroke="#000" stroke-width="0.25">JULIO</text>
<text x="138.8" y="458.5" font-size="15.2" fill="#000" textLength="7.2" lengthAdjust="spacingAndGlyphs" stroke="#000" stroke-width="0.25">$</text>
<text x="246.8" y="458.5" font-size="15.2" fill="#000" text-anchor="end" textLength="97.4" lengthAdjust="spacingAndGlyphs" stroke="#000" stroke-width="0.25">26,657,204.00</text>
<text x="34.3" y="482.5" font-size="15.2" fill="#000" textLength="61.0" lengthAdjust="spacingAndGlyphs" stroke="#000" stroke-width="0.25">AGOSTO</text>
<text x="138.8" y="482.5" font-size="15.2" fill="#000" textLength="7.2" lengthAdjust="spacingAndGlyphs" stroke="#000" stroke-width="0.25">$</text>
<text x="246.8" y="482.5" font-size="15.2" fill="#000" text-anchor="end" textLength="89.8" lengthAdjust="spacingAndGlyphs" stroke="#000" stroke-width="0.25">3,415,151.00</text>
<text x="34.3" y="506.5" font-size="15.2" fill="#000" textLength="88.7" lengthAdjust="spacingAndGlyphs" stroke="#000" stroke-width="0.25">SEPTIEMBRE</text>
<text x="138.8" y="506.5" font-size="15.2" fill="#000" textLength="7.2" lengthAdjust="spacingAndGlyphs" stroke="#000" stroke-width="0.25">$</text>
<text x="246.8" y="506.5" font-size="15.2" fill="#000" text-anchor="end" textLength="97.4" lengthAdjust="spacingAndGlyphs" stroke="#000" stroke-width="0.25">32,156,149.00</text>
<text x="34.3" y="530.5" font-size="15.2" fill="#000" textLength="67.2" lengthAdjust="spacingAndGlyphs" stroke="#000" stroke-width="0.25">OCTUBRE</text>
<text x="138.8" y="530.5" font-size="15.2" fill="#000" textLength="7.2" lengthAdjust="spacingAndGlyphs" stroke="#000" stroke-width="0.25">$</text>
<text x="246.8" y="530.5" font-size="15.2" fill="#000" text-anchor="end" textLength="97.4" lengthAdjust="spacingAndGlyphs" stroke="#000" stroke-width="0.25">13,237,532.00</text>
<text x="34.3" y="554.5" font-size="15.2" fill="#000" textLength="88.7" lengthAdjust="spacingAndGlyphs" stroke="#000" stroke-width="0.25">NOVIEMBRE</text>
<text x="138.8" y="554.5" font-size="15.2" fill="#000" textLength="7.2" lengthAdjust="spacingAndGlyphs" stroke="#000" stroke-width="0.25">$</text>
<text x="246.8" y="554.5" font-size="15.2" fill="#000" text-anchor="end" textLength="97.4" lengthAdjust="spacingAndGlyphs" stroke="#000" stroke-width="0.25">21,585,128.00</text>
<text x="34.3" y="578.5" font-size="15.2" fill="#000" textLength="79.4" lengthAdjust="spacingAndGlyphs" stroke="#000" stroke-width="0.25">DICIEMBRE</text>
<text x="138.8" y="578.5" font-size="15.2" fill="#000" textLength="7.2" lengthAdjust="spacingAndGlyphs" stroke="#000" stroke-width="0.25">$</text>
<text x="246.8" y="578.5" font-size="15.2" fill="#000" text-anchor="end" textLength="89.8" lengthAdjust="spacingAndGlyphs" stroke="#000" stroke-width="0.25">5,288,650.00</text>
<line x1="30.80" y1="271.70" x2="256.20" y2="271.70" stroke="#000" stroke-width="1.2"/>
<line x1="30.80" y1="295.70" x2="256.20" y2="295.70" stroke="#000" stroke-width="1.2"/>
<line x1="30.80" y1="319.70" x2="256.20" y2="319.70" stroke="#000" stroke-width="1.2"/>
<line x1="30.80" y1="343.70" x2="256.20" y2="343.70" stroke="#000" stroke-width="1.2"/>
<line x1="30.80" y1="367.70" x2="256.20" y2="367.70" stroke="#000" stroke-width="1.2"/>
<line x1="30.80" y1="391.70" x2="256.20" y2="391.70" stroke="#000" stroke-width="1.2"/>
<line x1="30.80" y1="415.70" x2="256.20" y2="415.70" stroke="#000" stroke-width="1.2"/>
<line x1="30.80" y1="439.70" x2="256.20" y2="439.70" stroke="#000" stroke-width="1.2"/>
<line x1="30.80" y1="463.70" x2="256.20" y2="463.70" stroke="#000" stroke-width="1.2"/>
<line x1="30.80" y1="487.70" x2="256.20" y2="487.70" stroke="#000" stroke-width="1.2"/>
<line x1="30.80" y1="511.70" x2="256.20" y2="511.70" stroke="#000" stroke-width="1.2"/>
<line x1="30.80" y1="535.70" x2="256.20" y2="535.70" stroke="#000" stroke-width="1.2"/>
<line x1="30.80" y1="559.70" x2="256.20" y2="559.70" stroke="#000" stroke-width="1.2"/>
<line x1="30.80" y1="583.70" x2="256.20" y2="583.70" stroke="#000" stroke-width="1.2"/>
<line x1="30.80" y1="271.70" x2="30.80" y2="583.70" stroke="#000" stroke-width="1.2"/>
<line x1="128.80" y1="271.70" x2="128.80" y2="583.70" stroke="#000" stroke-width="1.2"/>
<line x1="256.20" y1="271.70" x2="256.20" y2="583.70" stroke="#000" stroke-width="1.2"/>
<rect x="128.30" y="678.70" width="128.40" height="25.20" fill="none" stroke="#217346" stroke-width="2"/>
<rect x="252.60" y="699.90" width="6.40" height="6.40" fill="#217346" stroke="#fff" stroke-width="1"/>
<clipPath id="c1"><rect x="354" y="281.4" width="576" height="345.4"/></clipPath>
<rect x="354.00" y="281.40" width="576.00" height="345.40" fill="#fff" stroke="#d9d9d9" stroke-width="1"/>
<g clip-path="url(#c1)">
<text x="642.0" y="314.0" font-size="20.5" fill="#595959" text-anchor="middle" textLength="70.0" lengthAdjust="spacingAndGlyphs">VENTAS</text>
<line x1="475.20" y1="340.00" x2="912.00" y2="340.00" stroke="#d9d9d9" stroke-width="1"/>
<text x="458.5" y="343.3" font-size="13.2" fill="#595959" text-anchor="end" textLength="90.0" lengthAdjust="spacingAndGlyphs">$45,000,000.00</text>
<line x1="475.20" y1="362.42" x2="912.00" y2="362.42" stroke="#d9d9d9" stroke-width="1"/>
<text x="458.5" y="365.7" font-size="13.2" fill="#595959" text-anchor="end" textLength="90.0" lengthAdjust="spacingAndGlyphs">$40,000,000.00</text>
<line x1="475.20" y1="384.84" x2="912.00" y2="384.84" stroke="#d9d9d9" stroke-width="1"/>
<text x="458.5" y="388.1" font-size="13.2" fill="#595959" text-anchor="end" textLength="90.0" lengthAdjust="spacingAndGlyphs">$35,000,000.00</text>
<line x1="475.20" y1="407.26" x2="912.00" y2="407.26" stroke="#d9d9d9" stroke-width="1"/>
<text x="458.5" y="410.6" font-size="13.2" fill="#595959" text-anchor="end" textLength="90.0" lengthAdjust="spacingAndGlyphs">$30,000,000.00</text>
<line x1="475.20" y1="429.68" x2="912.00" y2="429.68" stroke="#d9d9d9" stroke-width="1"/>
<text x="458.5" y="433.0" font-size="13.2" fill="#595959" text-anchor="end" textLength="90.0" lengthAdjust="spacingAndGlyphs">$25,000,000.00</text>
<line x1="475.20" y1="452.10" x2="912.00" y2="452.10" stroke="#d9d9d9" stroke-width="1"/>
<text x="458.5" y="455.4" font-size="13.2" fill="#595959" text-anchor="end" textLength="90.0" lengthAdjust="spacingAndGlyphs">$20,000,000.00</text>
<line x1="475.20" y1="474.52" x2="912.00" y2="474.52" stroke="#d9d9d9" stroke-width="1"/>
<text x="458.5" y="477.8" font-size="13.2" fill="#595959" text-anchor="end" textLength="90.0" lengthAdjust="spacingAndGlyphs">$15,000,000.00</text>
<line x1="475.20" y1="496.94" x2="912.00" y2="496.94" stroke="#d9d9d9" stroke-width="1"/>
<text x="458.5" y="500.2" font-size="13.2" fill="#595959" text-anchor="end" textLength="90.0" lengthAdjust="spacingAndGlyphs">$10,000,000.00</text>
<line x1="475.20" y1="519.36" x2="912.00" y2="519.36" stroke="#d9d9d9" stroke-width="1"/>
<text x="458.5" y="522.7" font-size="13.2" fill="#595959" text-anchor="end" textLength="83.0" lengthAdjust="spacingAndGlyphs">$5,000,000.00</text>
<line x1="475.20" y1="541.78" x2="912.00" y2="541.78" stroke="#d9d9d9" stroke-width="1"/>
<text x="452.0" y="545.1" font-size="13.2" fill="#595959" text-anchor="end" textLength="11.0" lengthAdjust="spacingAndGlyphs">$-</text>
<rect x="487.75" y="377.84" width="11.30" height="163.94" fill="#4472c4"/>
<text x="493.6" y="561.0" font-size="12.6" fill="#595959" text-anchor="end" transform="rotate(-45 493.6 561.0)" textLength="40.0" lengthAdjust="spacingAndGlyphs">ENERO</text>
<rect x="524.15" y="395.04" width="11.30" height="146.74" fill="#4472c4"/>
<text x="530.0" y="561.0" font-size="12.6" fill="#595959" text-anchor="end" transform="rotate(-45 530.0 561.0)" textLength="52.0" lengthAdjust="spacingAndGlyphs">FEBRERO</text>
<rect x="560.55" y="405.69" width="11.30" height="136.09" fill="#4472c4"/>
<text x="566.4" y="561.0" font-size="12.6" fill="#595959" text-anchor="end" transform="rotate(-45 566.4 561.0)" textLength="43.5" lengthAdjust="spacingAndGlyphs">MARZO</text>
<rect x="596.95" y="463.53" width="11.30" height="78.25" fill="#4472c4"/>
<text x="602.8" y="561.0" font-size="12.6" fill="#595959" text-anchor="end" transform="rotate(-45 602.8 561.0)" textLength="33.5" lengthAdjust="spacingAndGlyphs">ABRIL</text>
<rect x="633.35" y="413.16" width="11.30" height="128.62" fill="#4472c4"/>
<text x="639.2" y="561.0" font-size="12.6" fill="#595959" text-anchor="end" transform="rotate(-45 639.2 561.0)" textLength="35.5" lengthAdjust="spacingAndGlyphs">MAYO</text>
<rect x="669.75" y="366.36" width="11.30" height="175.42" fill="#4472c4"/>
<text x="675.6" y="561.0" font-size="12.6" fill="#595959" text-anchor="end" transform="rotate(-45 675.6 561.0)" textLength="36.0" lengthAdjust="spacingAndGlyphs">JUNIO</text>
<rect x="706.15" y="422.25" width="11.30" height="119.53" fill="#4472c4"/>
<text x="712.0" y="561.0" font-size="12.6" fill="#595959" text-anchor="end" transform="rotate(-45 712.0 561.0)" textLength="31.0" lengthAdjust="spacingAndGlyphs">JULIO</text>
<rect x="742.55" y="526.47" width="11.30" height="15.31" fill="#4472c4"/>
<text x="748.4" y="561.0" font-size="12.6" fill="#595959" text-anchor="end" transform="rotate(-45 748.4 561.0)" textLength="48.5" lengthAdjust="spacingAndGlyphs">AGOSTO</text>
<rect x="778.95" y="397.59" width="11.30" height="144.19" fill="#4472c4"/>
<text x="784.8" y="561.0" font-size="12.6" fill="#595959" text-anchor="end" transform="rotate(-45 784.8 561.0)" textLength="72.0" lengthAdjust="spacingAndGlyphs">SEPTIEMBRE</text>
<rect x="815.35" y="482.42" width="11.30" height="59.36" fill="#4472c4"/>
<text x="821.2" y="561.0" font-size="12.6" fill="#595959" text-anchor="end" transform="rotate(-45 821.2 561.0)" textLength="54.0" lengthAdjust="spacingAndGlyphs">OCTUBRE</text>
<rect x="851.75" y="444.99" width="11.30" height="96.79" fill="#4472c4"/>
<text x="857.6" y="561.0" font-size="12.6" fill="#595959" text-anchor="end" transform="rotate(-45 857.6 561.0)" textLength="72.0" lengthAdjust="spacingAndGlyphs">NOVIEMBRE</text>
<rect x="888.15" y="518.07" width="11.30" height="23.71" fill="#4472c4"/>
<text x="894.0" y="561.0" font-size="12.6" fill="#595959" text-anchor="end" transform="rotate(-45 894.0 561.0)" textLength="64.0" lengthAdjust="spacingAndGlyphs">DICIEMBRE</text>
</g>
<clipPath id="c2"><rect x="1020" y="281.4" width="672" height="345.4"/></clipPath>
<rect x="1020.00" y="281.40" width="672.00" height="345.40" fill="#fff" stroke="#d9d9d9" stroke-width="1"/>
<g clip-path="url(#c2)">
<text x="1356.7" y="314.0" font-size="20.5" fill="#595959" text-anchor="middle" textLength="70.0" lengthAdjust="spacingAndGlyphs">VENTAS</text>
<line x1="1140.30" y1="340.00" x2="1674.30" y2="340.00" stroke="#d9d9d9" stroke-width="1"/>
<text x="1123.6" y="343.3" font-size="13.2" fill="#595959" text-anchor="end" textLength="90.0" lengthAdjust="spacingAndGlyphs">$45,000,000.00</text>
<line x1="1140.30" y1="362.42" x2="1674.30" y2="362.42" stroke="#d9d9d9" stroke-width="1"/>
<text x="1123.6" y="365.7" font-size="13.2" fill="#595959" text-anchor="end" textLength="90.0" lengthAdjust="spacingAndGlyphs">$40,000,000.00</text>
<line x1="1140.30" y1="384.84" x2="1674.30" y2="384.84" stroke="#d9d9d9" stroke-width="1"/>
<text x="1123.6" y="388.1" font-size="13.2" fill="#595959" text-anchor="end" textLength="90.0" lengthAdjust="spacingAndGlyphs">$35,000,000.00</text>
<line x1="1140.30" y1="407.26" x2="1674.30" y2="407.26" stroke="#d9d9d9" stroke-width="1"/>
<text x="1123.6" y="410.6" font-size="13.2" fill="#595959" text-anchor="end" textLength="90.0" lengthAdjust="spacingAndGlyphs">$30,000,000.00</text>
<line x1="1140.30" y1="429.68" x2="1674.30" y2="429.68" stroke="#d9d9d9" stroke-width="1"/>
<text x="1123.6" y="433.0" font-size="13.2" fill="#595959" text-anchor="end" textLength="90.0" lengthAdjust="spacingAndGlyphs">$25,000,000.00</text>
<line x1="1140.30" y1="452.10" x2="1674.30" y2="452.10" stroke="#d9d9d9" stroke-width="1"/>
<text x="1123.6" y="455.4" font-size="13.2" fill="#595959" text-anchor="end" textLength="90.0" lengthAdjust="spacingAndGlyphs">$20,000,000.00</text>
<line x1="1140.30" y1="474.52" x2="1674.30" y2="474.52" stroke="#d9d9d9" stroke-width="1"/>
<text x="1123.6" y="477.8" font-size="13.2" fill="#595959" text-anchor="end" textLength="90.0" lengthAdjust="spacingAndGlyphs">$15,000,000.00</text>
<line x1="1140.30" y1="496.94" x2="1674.30" y2="496.94" stroke="#d9d9d9" stroke-width="1"/>
<text x="1123.6" y="500.2" font-size="13.2" fill="#595959" text-anchor="end" textLength="90.0" lengthAdjust="spacingAndGlyphs">$10,000,000.00</text>
<line x1="1140.30" y1="519.36" x2="1674.30" y2="519.36" stroke="#d9d9d9" stroke-width="1"/>
<text x="1123.6" y="522.7" font-size="13.2" fill="#595959" text-anchor="end" textLength="83.0" lengthAdjust="spacingAndGlyphs">$5,000,000.00</text>
<line x1="1140.30" y1="541.78" x2="1674.30" y2="541.78" stroke="#d9d9d9" stroke-width="1"/>
<text x="1117.1" y="545.1" font-size="13.2" fill="#595959" text-anchor="end" textLength="11.0" lengthAdjust="spacingAndGlyphs">$-</text>
<rect x="1155.55" y="377.84" width="14.00" height="163.94" fill="#4472c4"/>
<text x="1165.3" y="561.0" font-size="12.6" fill="#595959" text-anchor="end" transform="rotate(-45 1165.3 561.0)" textLength="40.0" lengthAdjust="spacingAndGlyphs">ENERO</text>
<rect x="1200.05" y="395.04" width="14.00" height="146.74" fill="#4472c4"/>
<text x="1209.8" y="561.0" font-size="12.6" fill="#595959" text-anchor="end" transform="rotate(-45 1209.8 561.0)" textLength="52.0" lengthAdjust="spacingAndGlyphs">FEBRERO</text>
<rect x="1244.55" y="405.69" width="14.00" height="136.09" fill="#4472c4"/>
<text x="1254.3" y="561.0" font-size="12.6" fill="#595959" text-anchor="end" transform="rotate(-45 1254.3 561.0)" textLength="43.5" lengthAdjust="spacingAndGlyphs">MARZO</text>
<rect x="1289.05" y="463.53" width="14.00" height="78.25" fill="#4472c4"/>
<text x="1298.8" y="561.0" font-size="12.6" fill="#595959" text-anchor="end" transform="rotate(-45 1298.8 561.0)" textLength="33.5" lengthAdjust="spacingAndGlyphs">ABRIL</text>
<rect x="1333.55" y="413.16" width="14.00" height="128.62" fill="#4472c4"/>
<text x="1343.3" y="561.0" font-size="12.6" fill="#595959" text-anchor="end" transform="rotate(-45 1343.3 561.0)" textLength="35.5" lengthAdjust="spacingAndGlyphs">MAYO</text>
<rect x="1378.05" y="366.36" width="14.00" height="175.42" fill="#4472c4"/>
<text x="1387.8" y="561.0" font-size="12.6" fill="#595959" text-anchor="end" transform="rotate(-45 1387.8 561.0)" textLength="36.0" lengthAdjust="spacingAndGlyphs">JUNIO</text>
<rect x="1422.55" y="422.25" width="14.00" height="119.53" fill="#4472c4"/>
<text x="1432.3" y="561.0" font-size="12.6" fill="#595959" text-anchor="end" transform="rotate(-45 1432.3 561.0)" textLength="31.0" lengthAdjust="spacingAndGlyphs">JULIO</text>
<rect x="1467.05" y="526.47" width="14.00" height="15.31" fill="#4472c4"/>
<text x="1476.8" y="561.0" font-size="12.6" fill="#595959" text-anchor="end" transform="rotate(-45 1476.8 561.0)" textLength="48.5" lengthAdjust="spacingAndGlyphs">AGOSTO</text>
<rect x="1511.55" y="397.59" width="14.00" height="144.19" fill="#4472c4"/>
<text x="1521.3" y="561.0" font-size="12.6" fill="#595959" text-anchor="end" transform="rotate(-45 1521.3 561.0)" textLength="72.0" lengthAdjust="spacingAndGlyphs">SEPTIEMBRE</text>
<rect x="1556.05" y="482.42" width="14.00" height="59.36" fill="#4472c4"/>
<text x="1565.8" y="561.0" font-size="12.6" fill="#595959" text-anchor="end" transform="rotate(-45 1565.8 561.0)" textLength="54.0" lengthAdjust="spacingAndGlyphs">OCTUBRE</text>
<rect x="1600.55" y="444.99" width="14.00" height="96.79" fill="#4472c4"/>
<text x="1610.3" y="561.0" font-size="12.6" fill="#595959" text-anchor="end" transform="rotate(-45 1610.3 561.0)" textLength="72.0" lengthAdjust="spacingAndGlyphs">NOVIEMBRE</text>
<rect x="1645.05" y="518.07" width="14.00" height="23.71" fill="#4472c4"/>
<text x="1654.8" y="561.0" font-size="12.6" fill="#595959" text-anchor="end" transform="rotate(-45 1654.8 561.0)" textLength="64.0" lengthAdjust="spacingAndGlyphs">DICIEMBRE</text>
</g>
<rect x="1050.30" y="108.50" width="271.80" height="492.00" fill="#fff" stroke="#c8c8c8" stroke-width="1" filter="url(#dsh)"/>
<text x="1068.8" y="132.2" font-size="14.8" fill="#262626" font-weight="bold" textLength="106.0" lengthAdjust="spacingAndGlyphs">Columna en 2-D</text>
<text x="1068.8" y="246.0" font-size="14.8" fill="#262626" font-weight="bold" textLength="85.6" lengthAdjust="spacingAndGlyphs">Columnas 3D</text>
<text x="1068.8" y="360.2" font-size="14.8" fill="#262626" font-weight="bold" textLength="58.2" lengthAdjust="spacingAndGlyphs">Barra 2D</text>
<text x="1068.8" y="474.0" font-size="14.8" fill="#262626" font-weight="bold" textLength="57.5" lengthAdjust="spacingAndGlyphs">Barra 3D</text>
<line x1="1052.50" y1="222.50" x2="1320.00" y2="222.50" stroke="#e1e1e1" stroke-width="1"/>
<line x1="1052.50" y1="336.20" x2="1320.00" y2="336.20" stroke="#e1e1e1" stroke-width="1"/>
<line x1="1052.50" y1="450.30" x2="1320.00" y2="450.30" stroke="#e1e1e1" stroke-width="1"/>
<line x1="1052.50" y1="564.00" x2="1320.00" y2="564.00" stroke="#e1e1e1" stroke-width="1"/>
<rect x="1052.00" y="144.00" width="67.30" height="66.50" fill="#dadada"/>
<rect x="1065.40" y="165.60" width="8.90" height="37.60" fill="#7fb2ea" stroke="#2f6fc0" stroke-width="1.1"/>
<rect x="1074.30" y="180.20" width="8.30" height="23.00" fill="#fff" stroke="#595959" stroke-width="1.1"/>
<rect x="1088.30" y="168.50" width="8.30" height="34.70" fill="#c6c6c6" stroke="#8a8a8a" stroke-width="1.1"/>
<rect x="1096.60" y="155.20" width="9.40" height="48.00" fill="#fff" stroke="#595959" stroke-width="1.1"/>
<path d="M1059.8 151 V203.2 H1111.8" fill="none" stroke="#595959" stroke-width="1.2"/>
<rect x="1133.60" y="187.80" width="14.20" height="15.40" fill="#fff" stroke="#595959" stroke-width="1.1"/>
<rect x="1133.60" y="169.40" width="14.20" height="18.40" fill="#7fb2ea" stroke="#2f6fc0" stroke-width="1.1"/>
<rect x="1155.50" y="180.20" width="13.90" height="23.00" fill="#fff" stroke="#595959" stroke-width="1.1"/>
<rect x="1155.50" y="157.30" width="13.90" height="22.90" fill="#c6c6c6" stroke="#9a9a9a" stroke-width="1.1"/>
<path d="M1127 151 V203.2 H1179" fill="none" stroke="#595959" stroke-width="1.2"/>
<rect x="1200.60" y="191.50" width="14.10" height="11.70" fill="#fff" stroke="#595959" stroke-width="1.1"/>
<rect x="1200.60" y="157.30" width="14.10" height="34.20" fill="#7fb2ea" stroke="#2f6fc0" stroke-width="1.1"/>
<rect x="1222.60" y="173.20" width="13.40" height="30.00" fill="#fff" stroke="#595959" stroke-width="1.1"/>
<rect x="1222.60" y="157.30" width="13.40" height="15.90" fill="#c6c6c6" stroke="#9a9a9a" stroke-width="1.1"/>
<path d="M1194 151 V203.2 H1246" fill="none" stroke="#595959" stroke-width="1.2"/>
<path d="M1064.8 264.9 V305 H1111.8 M1064.8 305 L1059.6 311.6" fill="none" stroke="#595959" stroke-width="1.2"/>
<path d="M1067.6 289.0 H1076.0 V317.6 H1067.6 Z" fill="#fff" stroke="#595959" stroke-width="1.1" stroke-linejoin="round"/>
<path d="M1076.0 289.0 L1079.0 286.0 V314.6 L1076.0 317.6 Z" fill="#fff" stroke="#595959" stroke-width="1.1" stroke-linejoin="round"/>
<path d="M1067.6 289.0 L1070.6 286.0 H1079.0 L1076.0 289.0 Z" fill="#fff" stroke="#595959" stroke-width="1.1" stroke-linejoin="round"/>
<path d="M1076.2 276.3 H1084.9 V317.6 H1076.2 Z" fill="#7fb2ea" stroke="#2f6fc0" stroke-width="1.1" stroke-linejoin="round"/>
<path d="M1084.9 276.3 L1087.9 273.3 V314.6 L1084.9 317.6 Z" fill="#7fb2ea" stroke="#2f6fc0" stroke-width="1.1" stroke-linejoin="round"/>
<path d="M1076.2 276.3 L1079.2 273.3 H1087.9 L1084.9 276.3 Z" fill="#7fb2ea" stroke="#2f6fc0" stroke-width="1.1" stroke-linejoin="round"/>
<path d="M1090.6 281.3 H1098.9 V317.6 H1090.6 Z" fill="#fff" stroke="#595959" stroke-width="1.1" stroke-linejoin="round"/>
<path d="M1098.9 281.3 L1101.9 278.3 V314.6 L1098.9 317.6 Z" fill="#fff" stroke="#595959" stroke-width="1.1" stroke-linejoin="round"/>
<path d="M1090.6 281.3 L1093.6 278.3 H1101.9 L1098.9 281.3 Z" fill="#fff" stroke="#595959" stroke-width="1.1" stroke-linejoin="round"/>
<path d="M1099.4 287.1 H1107.5 V317.6 H1099.4 Z" fill="#c6c6c6" stroke="#8a8a8a" stroke-width="1.1" stroke-linejoin="round"/>
<path d="M1107.5 287.1 L1110.5 284.1 V314.6 L1107.5 317.6 Z" fill="#c6c6c6" stroke="#8a8a8a" stroke-width="1.1" stroke-linejoin="round"/>
<path d="M1099.4 287.1 L1102.4 284.1 H1110.5 L1107.5 287.1 Z" fill="#c6c6c6" stroke="#8a8a8a" stroke-width="1.1" stroke-linejoin="round"/>
<path d="M1134.2 264.9 V302.8 H1179 M1134.2 302.8 L1126.2 310.4" fill="none" stroke="#595959" stroke-width="1.2"/>
<path d="M1139.3 303.6 H1151.2 V317.6 H1139.3 Z" fill="#fff" stroke="#595959" stroke-width="1.1" stroke-linejoin="round"/>
<path d="M1151.2 303.6 L1154.6 300.2 V314.2 L1151.2 317.6 Z" fill="#fff" stroke="#595959" stroke-width="1.1" stroke-linejoin="round"/>
<path d="M1139.3 285.7 H1151.2 V303.6 H1139.3 Z" fill="#7fb2ea" stroke="#2f6fc0" stroke-width="1.1" stroke-linejoin="round"/>
<path d="M1151.2 285.7 L1154.6 282.3 V300.2 L1151.2 303.6 Z" fill="#7fb2ea" stroke="#2f6fc0" stroke-width="1.1" stroke-linejoin="round"/>
<path d="M1139.3 285.7 L1142.7 282.3 H1154.6 L1151.2 285.7 Z" fill="#7fb2ea" stroke="#2f6fc0" stroke-width="1.1" stroke-linejoin="round"/>
<path d="M1158.7 294.0 H1170.6 V317.6 H1158.7 Z" fill="#fff" stroke="#595959" stroke-width="1.1" stroke-linejoin="round"/>
<path d="M1170.6 294.0 L1174.0 290.6 V314.2 L1170.6 317.6 Z" fill="#fff" stroke="#595959" stroke-width="1.1" stroke-linejoin="round"/>
<path d="M1158.7 274.9 H1170.6 V294.0 H1158.7 Z" fill="#7fb2ea" stroke="#2f6fc0" stroke-width="1.1" stroke-linejoin="round"/>
<path d="M1170.6 274.9 L1174.0 271.5 V290.6 L1170.6 294.0 Z" fill="#7fb2ea" stroke="#2f6fc0" stroke-width="1.1" stroke-linejoin="round"/>
<path d="M1158.7 274.9 L1162.1 271.5 H1174.0 L1170.6 274.9 Z" fill="#7fb2ea" stroke="#2f6fc0" stroke-width="1.1" stroke-linejoin="round"/>
<path d="M1200.8 264.9 V302.8 H1246 M1200.8 302.8 L1193.5 310.4" fill="none" stroke="#595959" stroke-width="1.2"/>
<path d="M1206.4 303.6 H1218.2 V317.6 H1206.4 Z" fill="#fff" stroke="#595959" stroke-width="1.1" stroke-linejoin="round"/>
<path d="M1218.2 303.6 L1221.6 300.2 V314.2 L1218.2 317.6 Z" fill="#fff" stroke="#595959" stroke-width="1.1" stroke-linejoin="round"/>
<path d="M1206.4 274.9 H1218.2 V303.6 H1206.4 Z" fill="#7fb2ea" stroke="#2f6fc0" stroke-width="1.1" stroke-linejoin="round"/>
<path d="M1218.2 274.9 L1221.6 271.5 V300.2 L1218.2 303.6 Z" fill="#7fb2ea" stroke="#2f6fc0" stroke-width="1.1" stroke-linejoin="round"/>
<path d="M1206.4 274.9 L1209.8 271.5 H1221.6 L1218.2 274.9 Z" fill="#7fb2ea" stroke="#2f6fc0" stroke-width="1.1" stroke-linejoin="round"/>
<path d="M1225.8 286.2 H1237.6 V317.6 H1225.8 Z" fill="#fff" stroke="#595959" stroke-width="1.1" stroke-linejoin="round"/>
<path d="M1237.6 286.2 L1241.0 282.8 V314.2 L1237.6 317.6 Z" fill="#fff" stroke="#595959" stroke-width="1.1" stroke-linejoin="round"/>
<path d="M1225.8 274.9 H1237.6 V286.2 H1225.8 Z" fill="#7fb2ea" stroke="#2f6fc0" stroke-width="1.1" stroke-linejoin="round"/>
<path d="M1237.6 274.9 L1241.0 271.5 V282.8 L1237.6 286.2 Z" fill="#7fb2ea" stroke="#2f6fc0" stroke-width="1.1" stroke-linejoin="round"/>
<path d="M1225.8 274.9 L1229.2 271.5 H1241.0 L1237.6 274.9 Z" fill="#7fb2ea" stroke="#2f6fc0" stroke-width="1.1" stroke-linejoin="round"/>
<path d="M1265.7 264.9 V307.6 H1313 M1265.7 307.6 L1260.5 314.5" fill="none" stroke="#595959" stroke-width="1.2"/>
<path d="M1275.0 275.6 H1284.0 V313.0 H1275.0 Z" fill="#7fb2ea" stroke="#2f6fc0" stroke-width="1.1" stroke-linejoin="round"/>
<path d="M1284.0 275.6 L1286.6 273.0 V310.4 L1284.0 313.0 Z" fill="#7fb2ea" stroke="#2f6fc0" stroke-width="1.1" stroke-linejoin="round"/>
<path d="M1275.0 275.6 L1277.6 273.0 H1286.6 L1284.0 275.6 Z" fill="#7fb2ea" stroke="#2f6fc0" stroke-width="1.1" stroke-linejoin="round"/>
<path d="M1297.0 274.6 H1305.6 V312.5 H1297.0 Z" fill="#7fb2ea" stroke="#2f6fc0" stroke-width="1.1" stroke-linejoin="round"/>
<path d="M1305.6 274.6 L1308.2 272.0 V309.9 L1305.6 312.5 Z" fill="#7fb2ea" stroke="#2f6fc0" stroke-width="1.1" stroke-linejoin="round"/>
<path d="M1297.0 274.6 L1299.6 272.0 H1308.2 L1305.6 274.6 Z" fill="#7fb2ea" stroke="#2f6fc0" stroke-width="1.1" stroke-linejoin="round"/>
<path d="M1268.4 292.3 H1276.4 V317.6 H1268.4 Z" fill="#fff" stroke="#595959" stroke-width="1.1" stroke-linejoin="round"/>
<path d="M1276.4 292.3 L1279.0 289.7 V315.0 L1276.4 317.6 Z" fill="#fff" stroke="#595959" stroke-width="1.1" stroke-linejoin="round"/>
<path d="M1268.4 292.3 L1271.0 289.7 H1279.0 L1276.4 292.3 Z" fill="#fff" stroke="#595959" stroke-width="1.1" stroke-linejoin="round"/>
<path d="M1289.6 285.0 H1297.6 V317.6 H1289.6 Z" fill="#fff" stroke="#595959" stroke-width="1.1" stroke-linejoin="round"/>
<path d="M1297.6 285.0 L1300.2 282.4 V315.0 L1297.6 317.6 Z" fill="#fff" stroke="#595959" stroke-width="1.1" stroke-linejoin="round"/>
<path d="M1289.6 285.0 L1292.2 282.4 H1300.2 L1297.6 285.0 Z" fill="#fff" stroke="#595959" stroke-width="1.1" stroke-linejoin="round"/>
<rect x="1059.80" y="384.60" width="47.80" height="7.80" fill="#7fb2ea" stroke="#2f6fc0" stroke-width="1.1"/>
<rect x="1059.80" y="392.40" width="29.70" height="8.70" fill="#fff" stroke="#595959" stroke-width="1.1"/>
<rect x="1059.80" y="407.40" width="22.80" height="7.90" fill="#c6c6c6" stroke="#8a8a8a" stroke-width="1.1"/>
<rect x="1059.80" y="415.30" width="36.80" height="8.70" fill="#fff" stroke="#595959" stroke-width="1.1"/>
<path d="M1059.8 378.9 V431.3 H1111.8" fill="none" stroke="#595959" stroke-width="1.2"/>
<rect x="1127.00" y="386.60" width="16.40" height="13.10" fill="#fff" stroke="#595959" stroke-width="1.1"/>
<rect x="1143.40" y="386.60" width="18.30" height="13.10" fill="#7fb2ea" stroke="#2f6fc0" stroke-width="1.1"/>
<rect x="1127.00" y="408.60" width="22.20" height="12.90" fill="#f3f3f3" stroke="#595959" stroke-width="1.1"/>
<rect x="1149.20" y="408.60" width="23.30" height="12.90" fill="#c6c6c6" stroke="#9a9a9a" stroke-width="1.1"/>
<path d="M1127 378.9 V431.3 H1179" fill="none" stroke="#595959" stroke-width="1.2"/>
<rect x="1194.00" y="386.60" width="11.80" height="13.10" fill="#f6f6f6" stroke="#595959" stroke-width="1.1"/>
<rect x="1205.80" y="386.60" width="33.90" height="13.10" fill="#7fb2ea" stroke="#2f6fc0" stroke-width="1.1"/>
<rect x="1194.00" y="408.60" width="29.50" height="12.90" fill="#fff" stroke="#595959" stroke-width="1.1"/>
<rect x="1223.50" y="408.60" width="16.20" height="12.90" fill="#c6c6c6" stroke="#9a9a9a" stroke-width="1.1"/>
<path d="M1194 378.9 V431.3 H1246" fill="none" stroke="#595959" stroke-width="1.2"/>
<path d="M1069.4 493.2 V539.8 H1111.6 M1069.4 539.8 L1061.8 545" fill="none" stroke="#595959" stroke-width="1.2"/>
<path d="M1058.8 496.6 H1087.4 V503.6 H1058.8 Z" fill="#fff" stroke="#595959" stroke-width="1.1" stroke-linejoin="round"/>
<path d="M1058.8 496.6 L1061.0 494.4 H1089.6 L1087.4 496.6 Z" fill="#fff" stroke="#595959" stroke-width="1.1" stroke-linejoin="round"/>
<path d="M1087.4 496.6 L1089.6 494.4 V501.4 L1087.4 503.6 Z" fill="#fff" stroke="#595959" stroke-width="1.1" stroke-linejoin="round"/>
<path d="M1058.8 505.2 H1099.6 V513.6 H1058.8 Z" fill="#6f9fd6" stroke="#2f5f9f" stroke-width="1.1" stroke-linejoin="round"/>
<path d="M1058.8 505.2 L1061.0 503.0 H1101.8 L1099.6 505.2 Z" fill="#6f9fd6" stroke="#2f5f9f" stroke-width="1.1" stroke-linejoin="round"/>
<path d="M1099.6 505.2 L1101.8 503.0 V511.4 L1099.6 513.6 Z" fill="#6f9fd6" stroke="#2f5f9f" stroke-width="1.1" stroke-linejoin="round"/>
<path d="M1058.8 519.7 H1094.2 V527.2 H1058.8 Z" fill="#fff" stroke="#595959" stroke-width="1.1" stroke-linejoin="round"/>
<path d="M1058.8 519.7 L1061.0 517.5 H1096.4 L1094.2 519.7 Z" fill="#fff" stroke="#595959" stroke-width="1.1" stroke-linejoin="round"/>
<path d="M1094.2 519.7 L1096.4 517.5 V525.0 L1094.2 527.2 Z" fill="#fff" stroke="#595959" stroke-width="1.1" stroke-linejoin="round"/>
<path d="M1058.8 528.9 H1088.6 V536.2 H1058.8 Z" fill="#6f9fd6" stroke="#2f5f9f" stroke-width="1.1" stroke-linejoin="round"/>
<path d="M1058.8 528.9 L1061.0 526.7 H1090.8 L1088.6 528.9 Z" fill="#6f9fd6" stroke="#2f5f9f" stroke-width="1.1" stroke-linejoin="round"/>
<path d="M1088.6 528.9 L1090.8 526.7 V534.0 L1088.6 536.2 Z" fill="#6f9fd6" stroke="#2f5f9f" stroke-width="1.1" stroke-linejoin="round"/>
<path d="M1136.3 493.2 V537.5 H1178.8 M1136.3 537.5 L1129 545" fill="none" stroke="#595959" stroke-width="1.2"/>
<path d="M1126.0 503.0 H1139.5 V513.4 H1126.0 Z" fill="#fff" stroke="#595959" stroke-width="1.1" stroke-linejoin="round"/>
<path d="M1126.0 503.0 L1129.0 500.0 H1142.5 L1139.5 503.0 Z" fill="#fff" stroke="#595959" stroke-width="1.1" stroke-linejoin="round"/>
<path d="M1139.5 503.0 H1158.8 V513.4 H1139.5 Z" fill="#7fb2ea" stroke="#2f6fc0" stroke-width="1.1" stroke-linejoin="round"/>
<path d="M1139.5 503.0 L1142.5 500.0 H1161.8 L1158.8 503.0 Z" fill="#7fb2ea" stroke="#2f6fc0" stroke-width="1.1" stroke-linejoin="round"/>
<path d="M1158.8 503.0 L1161.8 500.0 V510.4 L1158.8 513.4 Z" fill="#7fb2ea" stroke="#2f6fc0" stroke-width="1.1" stroke-linejoin="round"/>
<path d="M1126.0 522.0 H1149.0 V533.0 H1126.0 Z" fill="#fff" stroke="#595959" stroke-width="1.1" stroke-linejoin="round"/>
<path d="M1126.0 522.0 L1129.0 519.0 H1152.0 L1149.0 522.0 Z" fill="#fff" stroke="#595959" stroke-width="1.1" stroke-linejoin="round"/>
<path d="M1149.0 522.0 H1169.8 V533.0 H1149.0 Z" fill="#7fb2ea" stroke="#2f6fc0" stroke-width="1.1" stroke-linejoin="round"/>
<path d="M1149.0 522.0 L1152.0 519.0 H1172.8 L1169.8 522.0 Z" fill="#7fb2ea" stroke="#2f6fc0" stroke-width="1.1" stroke-linejoin="round"/>
<path d="M1169.8 522.0 L1172.8 519.0 V530.0 L1169.8 533.0 Z" fill="#7fb2ea" stroke="#2f6fc0" stroke-width="1.1" stroke-linejoin="round"/>
<path d="M1203.3 493.2 V537.5 H1245.7 M1203.3 537.5 L1196 545" fill="none" stroke="#595959" stroke-width="1.2"/>
<path d="M1193.2 503.0 H1205.0 V513.4 H1193.2 Z" fill="#fff" stroke="#595959" stroke-width="1.1" stroke-linejoin="round"/>
<path d="M1193.2 503.0 L1196.2 500.0 H1208.0 L1205.0 503.0 Z" fill="#fff" stroke="#595959" stroke-width="1.1" stroke-linejoin="round"/>
<path d="M1205.0 503.0 H1235.6 V513.4 H1205.0 Z" fill="#7fb2ea" stroke="#2f6fc0" stroke-width="1.1" stroke-linejoin="round"/>
<path d="M1205.0 503.0 L1208.0 500.0 H1238.6 L1235.6 503.0 Z" fill="#7fb2ea" stroke="#2f6fc0" stroke-width="1.1" stroke-linejoin="round"/>
<path d="M1235.6 503.0 L1238.6 500.0 V510.4 L1235.6 513.4 Z" fill="#7fb2ea" stroke="#2f6fc0" stroke-width="1.1" stroke-linejoin="round"/>
<path d="M1193.2 522.0 H1215.0 V533.0 H1193.2 Z" fill="#fff" stroke="#595959" stroke-width="1.1" stroke-linejoin="round"/>
<path d="M1193.2 522.0 L1196.2 519.0 H1218.0 L1215.0 522.0 Z" fill="#fff" stroke="#595959" stroke-width="1.1" stroke-linejoin="round"/>
<path d="M1215.0 522.0 H1235.6 V533.0 H1215.0 Z" fill="#7fb2ea" stroke="#2f6fc0" stroke-width="1.1" stroke-linejoin="round"/>
<path d="M1215.0 522.0 L1218.0 519.0 H1238.6 L1235.6 522.0 Z" fill="#7fb2ea" stroke="#2f6fc0" stroke-width="1.1" stroke-linejoin="round"/>
<path d="M1235.6 522.0 L1238.6 519.0 V530.0 L1235.6 533.0 Z" fill="#7fb2ea" stroke="#2f6fc0" stroke-width="1.1" stroke-linejoin="round"/>
<rect x="1066.60" y="574.50" width="2.60" height="16.00" fill="#fff" stroke="#595959" stroke-width="1"/>
<rect x="1071.60" y="574.80" width="5.00" height="15.70" fill="#7fb2ea" stroke="#2f6fc0" stroke-width="1.1"/>
<rect x="1078.80" y="580.40" width="5.20" height="10.10" fill="#fff" stroke="#595959" stroke-width="1.1"/>
<line x1="1066.00" y1="590.80" x2="1085.00" y2="590.80" stroke="#595959" stroke-width="1.1"/>
<text x="1096.2" y="587.8" font-size="14.8" fill="#3a3a3a" textLength="176.0" lengthAdjust="spacingAndGlyphs">Más gráficos de columnas...</text>
<line x1="1096.20" y1="590.20" x2="1108.60" y2="590.20" stroke="#3a3a3a" stroke-width="1"/>
<path d="M1085 161 V181.8 L1089.7 177.4 L1093.4 185.8 L1096.6 184.4 L1093 176.2 H1099.4 Z" fill="#fff" stroke="#333" stroke-width="1.2" stroke-linejoin="round"/>
<path d="M230.1 72.1 L251.7 87.0 L245.6 89.7 L281.4 156.4 L237.5 93.7 L233.5 97.3 Z" fill="url(#ag)" stroke="#ffffff" stroke-width="1.5" stroke-linejoin="round" filter="url(#sh)"/>
<path d="M1038.0 100.2 L1021.8 120.4 L1020.5 116.0 L904.7 171.0 L1016.4 106.9 L1013.0 102.7 Z" fill="url(#ag)" stroke="#ffffff" stroke-width="1.5" stroke-linejoin="round" filter="url(#sh)"/>
<path d="M1060.2 188.4 L1036.9 201.2 L1038.7 195.7 L978.7 197.4 L1038.3 186.6 L1035.5 181.4 Z" fill="url(#ag)" stroke="#ffffff" stroke-width="1.5" stroke-linejoin="round" filter="url(#sh)"/>
<path d="M180.6 674.4 L154.9 667.2 L159.0 664.0 L86.7 600.1 L165.7 657.1 L168.4 651.0 Z" fill="url(#ag)" stroke="#ffffff" stroke-width="1.5" stroke-linejoin="round" filter="url(#sh)"/>
</g>
</svg>
</body></html>
